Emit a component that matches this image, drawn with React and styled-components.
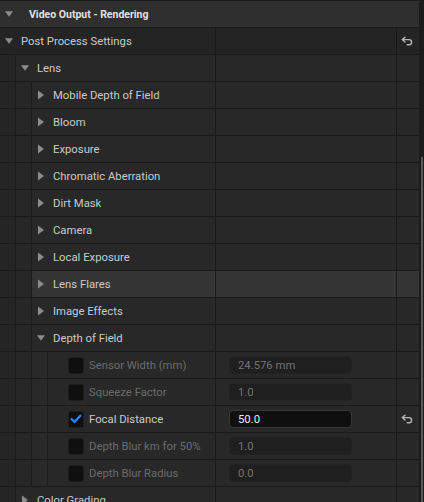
import styled, { createGlobalStyle } from "styled-components";

const GlobalStyle = createGlobalStyle`
  body {
    margin: 0;
    background: #1a1a1a;
    font-family: Roboto, "Liberation Sans", sans-serif;
  }
`;

const Panel = styled.div`
  width: 424px;
  height: 502px;
  display: flex;
  overflow: hidden;
  background: #1a1a1a;
`;

const List = styled.div`
  width: 419px;
  display: flex;
  flex-direction: column;
  gap: 1px;
  padding-top: 1px;
`;

const Scrollbar = styled.div`
  width: 5px;
  padding-top: 157px;
  display: flex;
  justify-content: center;
  background: #1c1c1c;
`;

const Thumb = styled.div`
  width: 2px;
  height: 345px;
  background: #585858;
`;

const Header = styled.div`
  height: 26px;
  flex-shrink: 0;
  display: flex;
  align-items: center;
  gap: 8px;
  padding-left: 5px;
  background: #2f2f2f;
  color: #e0e0e0;
  font-size: 10.5px;
  font-weight: 700;
`;

const Row = styled.div`
  height: 26px;
  flex-shrink: 0;
  display: grid;
  grid-template-columns: 215px 180px 22px;
  column-gap: 1px;
  --bg: ${(p) => (p.$hover ? "#353535" : p.$depth === 0 ? "#242424" : "#282828")};
`;

const NameCell = styled.div`
  display: flex;
  align-items: stretch;
  background: #252525;
`;

const Strip = styled.div`
  width: 15px;
  flex-shrink: 0;
  border-right: 1px solid #1c1c1c;
  background: ${(p) => p.$shade};
`;

const Label = styled.div`
  flex: 1;
  display: flex;
  align-items: center;
  padding-left: ${(p) => (p.$leaf ? "20px" : "5px")};
  background: var(--bg);
  font-size: 11.3px;
  color: ${(p) => (p.$dim ? "#6b6b6b" : "#cacaca")};
  white-space: nowrap;
`;

const LabelText = styled.span`
  padding-top: 1px;
`;

const Arrow = styled.span`
  width: 8px;
  height: 10px;
  margin-right: 8px;
  display: flex;
  align-items: center;
  justify-content: center;
`;

const ValueCell = styled.div`
  display: flex;
  align-items: center;
  padding-left: 13px;
  background: var(--bg);
`;

const ResetCell = styled.div`
  display: flex;
  align-items: center;
  justify-content: center;
  padding-right: 3px;
  background: var(--bg);
`;

const Input = styled.div`
  width: 123px;
  height: 18px;
  box-sizing: border-box;
  display: flex;
  align-items: center;
  padding: 1px 0 0 8px;
  border-radius: 4px;
  font-size: 11.3px;
  background: ${(p) => (p.$active ? "#0f0f0f" : "#1f1f1f")};
  border: 1px solid ${(p) => (p.$active ? "#383838" : "#222222")};
  color: ${(p) => (p.$active ? "#ececec" : "#737373")};
`;

const Check = styled.span`
  width: 16px;
  height: 17px;
  box-sizing: border-box;
  margin-right: 5px;
  border-radius: 3px;
  background: #0f0f0f;
  border: 1px solid #1d1d1d;
  display: flex;
  align-items: center;
  justify-content: center;
`;

const stripShades = ["#252525", "#272727", "#292929"];

function Caret({ open }) {
  return (
    <Arrow>
      {open ? (
        <svg width="9" height="6" viewBox="0 0 9 6">
          <path d="M0 0 H9 L4.5 6 Z" fill="#8c8c8c" />
        </svg>
      ) : (
        <svg width="6" height="10" viewBox="0 0 6 10">
          <path d="M0 0.5 L6 5 L0 9.5 Z" fill="#8c8c8c" />
        </svg>
      )}
    </Arrow>
  );
}

function ResetIcon() {
  return (
    <svg width="12" height="10" viewBox="0 0 12 10">
      <path
        d="M4 1.2 L1.3 3.6 L4 6 M1.6 3.6 H8 A2.6 2.6 0 0 1 8 8.8 H6.2"
        fill="none"
        stroke="#b4b4b4"
        strokeWidth="1.4"
        strokeLinecap="round"
        strokeLinejoin="round"
      />
    </svg>
  );
}

function PropRow({ depth, label, open, leaf, checked, value, active, reset, hover }) {
  const strips = [];
  for (let i = 0; i < depth; i++) strips.push(<Strip key={i} $shade={stripShades[i]} />);
  return (
    <Row $depth={depth} $hover={hover}>
      <NameCell>
        {strips}
        <Label $leaf={leaf} $dim={leaf && !checked}>
          {leaf ? (
            <Check>
              {checked && (
                <svg width="12" height="10" viewBox="0 0 12 10">
                  <path
                    d="M1.5 5 L4.5 8 L10.5 1.5"
                    fill="none"
                    stroke="#2a8cf7"
                    strokeWidth="2"
                    strokeLinecap="round"
                    strokeLinejoin="round"
                  />
                </svg>
              )}
            </Check>
          ) : (
            <Caret open={open} />
          )}
          <LabelText>{label}</LabelText>
        </Label>
      </NameCell>
      <ValueCell>{value && <Input $active={active}>{value}</Input>}</ValueCell>
      <ResetCell>{reset && <ResetIcon />}</ResetCell>
    </Row>
  );
}

const lensItems = [
  "Mobile Depth of Field",
  "Bloom",
  "Exposure",
  "Chromatic Aberration",
  "Dirt Mask",
  "Camera",
  "Local Exposure",
  "Lens Flares",
  "Image Effects",
];

const dofItems = [
  { label: "Sensor Width (mm)", value: "24.576 mm" },
  { label: "Squeeze Factor", value: "1.0" },
  { label: "Focal Distance", value: "50.0", checked: true },
  { label: "Depth Blur km for 50%", value: "1.0" },
  { label: "Depth Blur Radius", value: "0.0" },
];

export default function App() {
  return (
    <Panel>
      <GlobalStyle />
      <List>
        <Header>
          <Caret open />
          Video Output - Rendering
        </Header>
        <PropRow depth={0} label="Post Process Settings" open reset />
        <PropRow depth={1} label="Lens" open />
        {lensItems.map((name) => (
          <PropRow key={name} depth={2} label={name} hover={name === "Lens Flares"} />
        ))}
        <PropRow depth={2} label="Depth of Field" open />
        {dofItems.map((item) => (
          <PropRow
            key={item.label}
            depth={3}
            leaf
            label={item.label}
            value={item.value}
            checked={item.checked}
            active={item.checked}
            reset={item.checked}
          />
        ))}
        <PropRow depth={1} label="Color Grading" />
      </List>
      <Scrollbar>
        <Thumb />
      </Scrollbar>
    </Panel>
  );
}
